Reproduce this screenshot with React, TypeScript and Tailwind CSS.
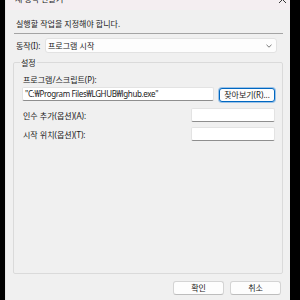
import React from "react"

const font = { fontFamily: '"Noto Sans", "Noto Sans CJK KR", sans-serif' }

function TextBox({ className = "", value = "" }: { className?: string; value?: string }) {
  return (
    <div
      className={`h-[14px] bg-white border border-[#e3e3e3] border-b-[#8e8e8e] rounded-[2px] px-[2px] text-[8px] leading-[12px] tracking-[-0.35px] whitespace-nowrap overflow-hidden ${className}`}
    >
      {value}
    </div>
  )
}

function DlgButton({ label, focused = false }: { label: string; focused?: boolean }) {
  return (
    <div
      className={`h-[14px] flex items-center justify-center rounded-[3px] bg-[#fdfdfd] text-[8px] leading-[12px] ${
        focused ? "border border-[#0067c0] shadow-[0_0_0_1px_#9cc3e8]" : "border border-[#d4d4d4] border-b-[#bdbdbd]"
      }`}
    >
      {label}
    </div>
  )
}

export default function App() {
  return (
    <div className="w-[300px] h-[300px] bg-black flex overflow-hidden text-[#1b1b1b]" style={font}>
      <div className="ml-[5px] w-[285px] h-full bg-[#f0f0f0] flex flex-col border-l border-[#e6e6e6]">
        {/* title bar */}
        <div className="h-[10px] bg-[#f4eef1] relative overflow-hidden shrink-0">
          <span className="absolute left-[9px] -top-[7px] text-[8px] leading-[11px]">새 동작 만들기</span>
          <svg className="absolute left-[272px] -top-[5px]" width="9" height="9" viewBox="0 0 9 9">
            <path d="M1 1 L8 8 M8 1 L1 8" stroke="#222" strokeWidth="0.9" fill="none" />
          </svg>
        </div>

        <div className="mt-[8px] h-[11px] pl-[10px] text-[8px] leading-[11px]">실행할 작업을 지정해야 합니다.</div>

        <div className="mt-[4px] ml-[8px] mr-[7px] border-t border-[#a4a4a4]" />

        <div className="mt-[4px] flex items-center h-[15px]">
          <div className="w-[39px] pl-[10px] text-[8px] leading-[11px]">동작(I):</div>
          <div className="flex-1 mr-[13px] h-[15px] bg-[#fdfdfd] border border-[#e2e2e2] rounded-[3px] flex items-center pl-[2px] pr-[4px] text-[8px] leading-[11px]">
            <span className="flex-1">프로그램 시작</span>
            <svg width="6" height="4" viewBox="0 0 6 4">
              <path d="M0.5 0.8 L3 3.2 L5.5 0.8" stroke="#555" strokeWidth="0.8" fill="none" />
            </svg>
          </div>
        </div>

        <fieldset className="mt-[4px] ml-[7px] mr-[7px] h-[217px] border border-[#dadada] rounded-[2px] p-0">
          <legend className="ml-[6px] px-[1px] text-[8px] leading-[11px]">설정</legend>

          <div className="mt-[6px] pl-[9px] text-[8px] leading-[11px]">프로그램/스크립트(P):</div>

          <div className="mt-[2px] flex pl-[8px] pr-[7px]">
            <TextBox className="w-[192px]" value={'"C:₩Program Files₩LGHUB₩lghub.exe"'} />
            <div className="ml-[5px] w-[56px] mt-[1px]">
              <DlgButton label="찾아보기(R)..." focused />
            </div>
          </div>

          <div className="mt-[6px] flex items-center pl-[9px] pr-[7px]">
            <div className="flex-1 text-[8px] leading-[11px]">인수 추가(옵션)(A):</div>
            <TextBox className="w-[84px]" />
          </div>

          <div className="mt-[5px] flex items-center pl-[9px] pr-[7px]">
            <div className="flex-1 text-[8px] leading-[11px]">시작 위치(옵션)(T):</div>
            <TextBox className="w-[84px]" />
          </div>
        </fieldset>

        <div className="mt-[7px] flex justify-end gap-[6px] pr-[9px]">
          <div className="w-[51px]">
            <DlgButton label="확인" />
          </div>
          <div className="w-[51px]">
            <DlgButton label="취소" />
          </div>
        </div>
      </div>
    </div>
  )
}
